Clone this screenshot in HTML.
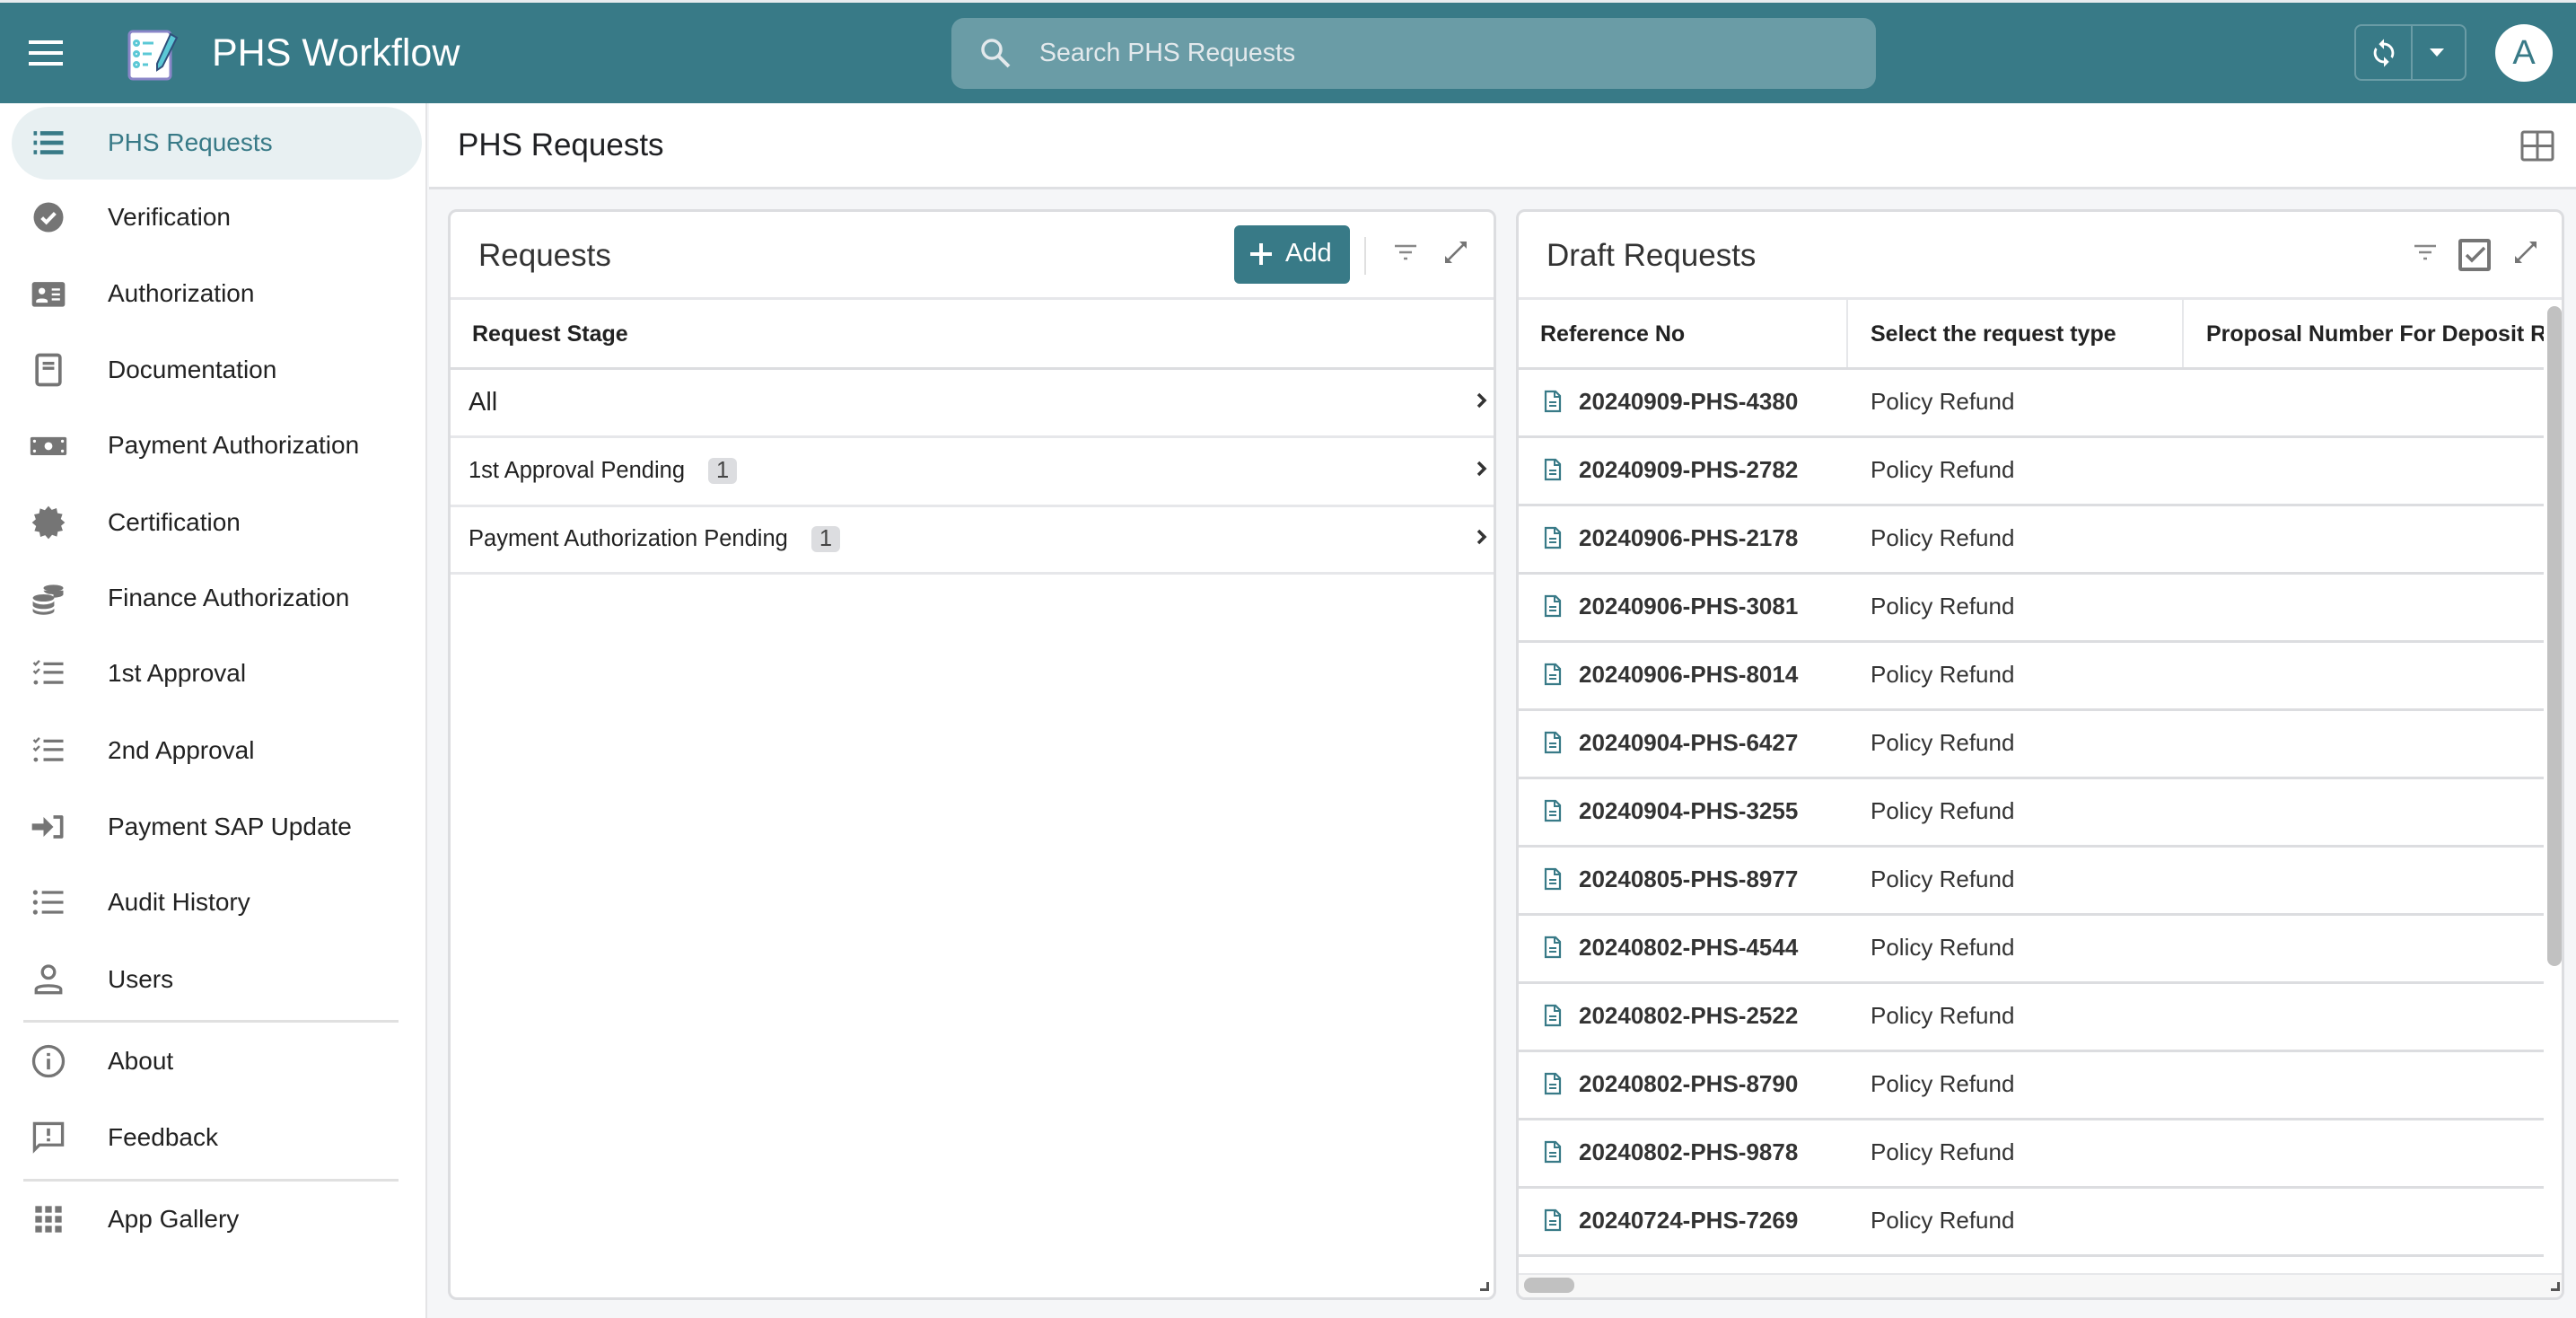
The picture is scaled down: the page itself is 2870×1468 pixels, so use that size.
<!DOCTYPE html>
<html><head><meta charset="utf-8"><style>
*{box-sizing:border-box;margin:0;padding:0}
body{width:2870px;height:1468px;overflow:hidden;background:#f5f6f8;font-family:"Liberation Sans",Arial,sans-serif;color:#202124;position:relative}
.abs{position:absolute}
#hdr{left:0;top:3px;width:2870px;height:112px;background:#387a87}
#top{left:0;top:0;width:2870px;height:3px;background:#e8ecef}
#side{left:0;top:115px;width:476px;height:1353px;background:#fff;border-right:2px solid #e4e4e6}
.ni{position:absolute;left:0;width:476px;height:60px;display:flex;align-items:center}
.ni svg{position:absolute;left:32px;width:44px;height:44px}
.ni span{position:absolute;left:120px;font-size:28px;color:#222}
.div{position:absolute;left:26px;width:418px;height:3px;background:#e0e0e0}
#titlebar{left:478px;top:115px;width:2392px;height:96px;background:#fff;border-bottom:3px solid #dfe0e3}
.card{background:#fff;border:3px solid #dcdde0;border-radius:10px;overflow:hidden}
.line{position:absolute;left:0;right:0;height:3px;background:#e6e7ea}
.ico{fill:#757575}
</style></head><body>
<div id="top" class="abs"></div>
<div id="hdr" class="abs">
 <svg class="abs" style="left:32px;top:42px" width="42" height="30" viewBox="0 0 42 30"><rect y="0" width="38" height="4" fill="#fff"/><rect y="12" width="38" height="4" fill="#fff"/><rect y="24" width="38" height="4" fill="#fff"/></svg>
 <svg class="abs" style="left:140px;top:27px" width="62" height="60" viewBox="0 0 62 60">
  <rect x="4" y="5" width="46" height="53" rx="4" fill="#fff" stroke="#8a86c8" stroke-width="3"/>
  <g stroke="#5bc8d6" stroke-width="3" fill="none"><circle cx="12" cy="18" r="2.5"/><circle cx="12" cy="30" r="2.5"/><circle cx="12" cy="42" r="2.5"/><path d="M19 18h12M19 30h10M19 42h6"/></g>
  <path d="M50 8l7 4-16 32-6 4 0-7z" fill="#5bc8d6" stroke="#2f4f7a" stroke-width="2"/>
 </svg>
 <div class="abs" style="left:236px;top:32px;font-size:43px;color:#fff">PHS Workflow</div>
 <div class="abs" style="left:1060px;top:17px;width:1030px;height:79px;background:#6a9ca6;border-radius:14px">
  <svg class="abs" style="left:30px;top:20px" width="40" height="40" viewBox="0 0 40 40"><circle cx="15" cy="15" r="10" fill="none" stroke="#e3e9ec" stroke-width="3.5"/><path d="M22 22l12 12" stroke="#e3e9ec" stroke-width="4"/></svg>
  <div class="abs" style="left:98px;top:23px;font-size:28.5px;color:#e3e9ec">Search PHS Requests</div>
 </div>
 <div class="abs" style="left:2623px;top:24px;width:125px;height:63px;border:2px solid #6a9ca6;border-radius:8px">
  <div class="abs" style="left:61px;top:0;width:2px;height:59px;background:#6a9ca6"></div>
  <svg class="abs" style="left:14px;top:12px" width="34" height="36" viewBox="0 0 24 24"><path fill="#fff" d="M12 4V1L8 5l4 4V6c3.3 0 6 2.7 6 6 0 1-.25 2-.7 2.8l1.460 1.46C19.54 15.03 20 13.570 20 12c0-4.42-3.58-8-8-8zm0 14c-3.3 0-6-2.7-6-6 0-1 .25-2 .7-2.8L5.24 7.74C4.46 8.97 4 10.43 4 12c0 4.42 3.58 8 8 8v3l4-4-4-4v3z"/></svg>
  <svg class="abs" style="left:80px;top:22px" width="20" height="14" viewBox="0 0 20 14"><path d="M2 3h16l-8 9z" fill="#fff"/></svg>
 </div>
 <div class="abs" style="left:2780px;top:24px;width:64px;height:64px;border-radius:50%;background:#fff;color:#387a87;font-size:38px;text-align:center;line-height:64px">A</div>
</div>

<div id="side" class="abs">
 <div class="abs" style="left:13px;top:4px;width:457px;height:81px;background:#e8f0f2;border-radius:41px"></div>
 <div class="ni" style="top:14px"><svg viewBox="0 0 24 24"><path fill="#387a87" d="M3 5h2v2.5H3zm0 5.7h2v2.6H3zM3 16.5h2V19H3zM7 5h14v2.5H7zm0 5.7h14v2.6H7zm0 5.8h14V19H7z"/></svg><span style="color:#387a87">PHS Requests</span></div>
 <div class="ni" style="top:97px"><svg viewBox="0 0 24 24"><circle cx="12" cy="12" r="9" class="ico"/><path d="M8 12.3l2.7 2.7L16 9.5" stroke="#fff" stroke-width="2.2" fill="none"/></svg><span>Verification</span></div>
 <div class="ni" style="top:182px"><svg viewBox="0 0 24 24"><rect x="2" y="5" width="20" height="15" rx="1.5" class="ico"/><circle cx="8" cy="10.5" r="2" fill="#fff"/><path d="M4.5 16.5c0-2 7-2 7 0v1h-7z" fill="#fff"/><path d="M14 9.5h5M14 12.5h5M14 15.5h5" stroke="#fff" stroke-width="1.3"/></svg><span>Authorization</span></div>
 <div class="ni" style="top:267px"><svg viewBox="0 0 24 24"><rect x="5" y="3" width="14" height="18" rx="1.5" fill="none" stroke="#757575" stroke-width="2"/><path d="M8.5 8h7M8.5 11h7" stroke="#757575" stroke-width="1.8"/></svg><span>Documentation</span></div>
 <div class="ni" style="top:351px"><svg viewBox="0 0 24 24" style="width:48px;left:30px"><rect x="1" y="7" width="22" height="11" rx="1" class="ico"/><circle cx="12" cy="12.5" r="2.4" fill="#fff"/><circle cx="3.5" cy="9.5" r=".9" fill="#fff"/><circle cx="20.5" cy="9.5" r=".9" fill="#fff"/><circle cx="3.5" cy="15.5" r=".9" fill="#fff"/><circle cx="20.5" cy="15.5" r=".9" fill="#fff"/></svg><span>Payment Authorization</span></div>
 <div class="ni" style="top:437px"><svg viewBox="0 0 24 24"><path class="ico" d="M12 2l2 2.3 2.9-1 .6 3 3 .6-1 2.9L22 12l-2.3 2 1 2.9-3 .6-.6 3-2.9-1L12 22l-2-2.3-2.9 1-.6-3-3-.6 1-2.9L2 12l2.3-2-1-2.9 3-.6.6-3 2.9 1z"/></svg><span>Certification</span></div>
 <div class="ni" style="top:521px"><svg viewBox="0 0 24 24"><ellipse cx="15" cy="6" rx="6" ry="2" class="ico"/><path class="ico" d="M9 7.5h12v2.3c0 1.1-2.7 2-6 2v-2c-1 0-5 0-6-2.3z"/><ellipse cx="9" cy="12" rx="6.5" ry="2.2" class="ico"/><path class="ico" d="M2.5 14c1 1.4 4 2 6.5 2s5.5-.6 6.5-2v2.5c0 1.2-3 2.2-6.5 2.2s-6.5-1-6.5-2.2zM2.5 18.5c1 1.4 4 2 6.5 2s5.5-.6 6.5-2V20c0 1.2-3 2.2-6.5 2.2S2.5 21.2 2.5 20z"/></svg><span>Finance Authorization</span></div>
 <div class="ni" style="top:605px"><svg viewBox="0 0 24 24"><path d="M3 5.5l1.2 1.2L6.5 4.3M3 10.5l1.2 1.2 2.3-2.4" stroke="#757575" stroke-width="1.3" fill="none"/><circle cx="4.3" cy="17.5" r="1.3" class="ico"/><path d="M9 5.3h12v1.8H9zm0 5.2h12v1.8H9zm0 6.1h12v1.8H9z" class="ico"/></svg><span>1st Approval</span></div>
 <div class="ni" style="top:691px"><svg viewBox="0 0 24 24"><path d="M3 5.5l1.2 1.2L6.5 4.3M3 10.5l1.2 1.2 2.3-2.4" stroke="#757575" stroke-width="1.3" fill="none"/><circle cx="4.3" cy="17.5" r="1.3" class="ico"/><path d="M9 5.3h12v1.8H9zm0 5.2h12v1.8H9zm0 6.1h12v1.8H9z" class="ico"/></svg><span>2nd Approval</span></div>
 <div class="ni" style="top:776px"><svg viewBox="0 0 24 24"><path class="ico" d="M2 10h7V6l6 6-6 6v-4H2zM15 5h5a1 1 0 011 1v12a1 1 0 01-1 1h-5v-2h4V7h-4z"/></svg><span>Payment SAP Update</span></div>
 <div class="ni" style="top:860px"><svg viewBox="0 0 24 24"><circle cx="4" cy="6" r="1.4" class="ico"/><circle cx="4" cy="12" r="1.4" class="ico"/><circle cx="4" cy="18" r="1.4" class="ico"/><path d="M8 5.1h13v1.8H8zm0 6h13v1.8H8zm0 6h13v1.8H8z" class="ico"/></svg><span>Audit History</span></div>
 <div class="ni" style="top:946px"><svg viewBox="0 0 24 24"><circle cx="12" cy="7.5" r="3.7" fill="none" stroke="#757575" stroke-width="1.8"/><path d="M4.5 20v-2c0-3 15-3 15 0v2z" fill="none" stroke="#757575" stroke-width="1.8"/></svg><span>Users</span></div>
 <div class="div" style="top:1021px"></div>
 <div class="ni" style="top:1037px"><svg viewBox="0 0 24 24"><circle cx="12" cy="12" r="9" fill="none" stroke="#757575" stroke-width="1.8"/><path d="M12 10.5v6.5M12 7v1.8" stroke="#757575" stroke-width="2"/></svg><span>About</span></div>
 <div class="ni" style="top:1122px"><svg viewBox="0 0 24 24"><path d="M3.5 3.5h17v13h-14l-3 3z" fill="none" stroke="#757575" stroke-width="1.8"/><path d="M12 6.5v4.5M12 12.5v1.8" stroke="#757575" stroke-width="2"/></svg><span>Feedback</span></div>
 <div class="div" style="top:1198px"></div>
 <div class="ni" style="top:1213px"><svg viewBox="0 0 24 24"><g class="ico"><rect x="4" y="4" width="4" height="4"/><rect x="10" y="4" width="4" height="4"/><rect x="16" y="4" width="4" height="4"/><rect x="4" y="10" width="4" height="4"/><rect x="10" y="10" width="4" height="4"/><rect x="16" y="10" width="4" height="4"/><rect x="4" y="16" width="4" height="4"/><rect x="10" y="16" width="4" height="4"/><rect x="16" y="16" width="4" height="4"/></g></svg><span>App Gallery</span></div>
</div>

<div id="titlebar" class="abs">
 <div class="abs" style="left:32px;top:27px;font-size:35px;color:#202124">PHS Requests</div>
 <svg class="abs" style="left:2330px;top:30px" width="38" height="36" viewBox="0 0 38 36"><rect x="2" y="2" width="34" height="31" rx="2" fill="none" stroke="#757575" stroke-width="3"/><path d="M19 2v31M2 17.5h34" stroke="#757575" stroke-width="3"/></svg>
</div>

<!-- Requests card -->
<div class="abs card" style="left:499px;top:233px;width:1168px;height:1215px">
 <div class="abs" style="left:31px;top:29px;font-size:35px;color:#333">Requests</div>
 <div class="abs" style="left:873px;top:15px;width:129px;height:65px;background:#387a87;border-radius:6px;color:#fff;font-size:29px">
  <svg class="abs" style="left:16px;top:18px" width="28" height="28" viewBox="0 0 28 28"><path d="M14 2v24M2 14h24" stroke="#fff" stroke-width="4"/></svg>
  <span class="abs" style="left:57px;top:15px">Add</span></div>
 <div class="abs" style="left:1018px;top:28px;width:2px;height:42px;background:#e0e0e0"></div>
 <svg class="abs" style="left:1051px;top:35px" width="26" height="22" viewBox="0 0 26 22"><path d="M1 3h24M6 10h14M11 17h4" stroke="#888" stroke-width="2.6"/></svg>
 <svg class="abs" style="left:1104px;top:29px" width="32" height="32" viewBox="0 0 24 24"><path fill="#757575" d="M21 3h-6l2.3 2.3-12 12L3 15v6h6l-2.3-2.3 12-12L21 9z"/></svg>
 <div class="line" style="top:95px"></div>
 <div class="abs" style="left:24px;top:122px;font-size:25px;font-weight:bold;color:#222">Request Stage</div>
 <div class="line" style="top:173px;background:#dcdde0"></div>
 <div class="abs" style="left:20px;top:196px;font-size:29px;color:#222">All</div>
 <div class="line" style="top:249px"></div>
 <div class="abs" style="left:20px;top:274px;font-size:25.5px;color:#222">1st Approval Pending<span style="display:inline-block;margin-left:26px;background:#dcdde0;border-radius:6px;padding:0 9px;color:#444">1</span></div>
 <div class="line" style="top:326px"></div>
 <div class="abs" style="left:20px;top:350px;font-size:25.5px;color:#222">Payment Authorization Pending<span style="display:inline-block;margin-left:26px;background:#dcdde0;border-radius:6px;padding:0 9px;color:#444">1</span></div>
 <div class="line" style="top:401px"></div>
 <svg class="abs" style="left:1142px;top:200px" width="14" height="20" viewBox="0 0 14 20"><path d="M3 3l7 7-7 7" stroke="#333" stroke-width="3.5" fill="none"/></svg>
 <svg class="abs" style="left:1142px;top:276px" width="14" height="20" viewBox="0 0 14 20"><path d="M3 3l7 7-7 7" stroke="#333" stroke-width="3.5" fill="none"/></svg>
 <svg class="abs" style="left:1142px;top:352px" width="14" height="20" viewBox="0 0 14 20"><path d="M3 3l7 7-7 7" stroke="#333" stroke-width="3.5" fill="none"/></svg>
 <div class="abs" style="left:1147px;top:1192px;width:10px;height:10px;border-right:3px solid #555;border-bottom:3px solid #555"></div>
</div>

<!-- Draft card -->
<div class="abs card" style="left:1689px;top:233px;width:1168px;height:1215px">
 <div class="abs" style="left:31px;top:29px;font-size:35px;color:#333">Draft Requests</div>
 <svg class="abs" style="left:997px;top:35px" width="26" height="22" viewBox="0 0 26 22"><path d="M1 3h24M6 10h14M11 17h4" stroke="#888" stroke-width="2.6"/></svg>
 <div class="abs" style="left:1047px;top:30px;width:36px;height:36px;border:4px solid #757575;border-radius:3px"><svg class="abs" style="left:3px;top:4px" width="24" height="20" viewBox="0 0 24 20"><path d="M2 10l6 6L22 2" stroke="#757575" stroke-width="3.5" fill="none"/></svg></div>
 <svg class="abs" style="left:1106px;top:29px" width="32" height="32" viewBox="0 0 24 24"><path fill="#757575" d="M21 3h-6l2.3 2.3-12 12L3 15v6h6l-2.3-2.3 12-12L21 9z"/></svg>
 <div class="line" style="top:95px"></div>
 <div class="abs" style="left:0;top:98px;width:1142px;height:1090px;overflow:hidden" id="tbl">
  <div class="abs" style="left:365px;top:0;width:2px;height:76px;background:#e6e7ea"></div>
  <div class="abs" style="left:739px;top:0;width:2px;height:76px;background:#e6e7ea"></div>
  <div class="abs" style="left:24px;top:24px;font-size:25px;font-weight:bold;color:#222;white-space:nowrap">Reference No</div>
  <div class="abs" style="left:392px;top:24px;font-size:25px;font-weight:bold;color:#222;white-space:nowrap">Select the request type</div>
  <div class="abs" style="left:766px;top:24px;font-size:25px;font-weight:bold;color:#222;white-space:nowrap">Proposal Number For Deposit Refund</div>
  <div class="abs" style="left:0;top:75px;width:1142px;height:3px;background:#dcdde0"></div>
  <div id="rows"></div>
 </div>
 <div class="abs" style="left:1146px;top:105px;width:16px;height:735px;background:#c1c1c1;border-radius:8px"></div>
 <div class="abs" style="left:0;top:1182px;width:1162px;height:28px;background:#f7f7f7;border-top:2px solid #e6e7ea"></div>
 <div class="abs" style="left:6px;top:1187px;width:56px;height:17px;background:#c1c1c1;border-radius:8px"></div>
 <div class="abs" style="left:1150px;top:1192px;width:10px;height:10px;border-right:3px solid #555;border-bottom:3px solid #555"></div>
</div>
<script>
var ids=["20240909-PHS-4380","20240909-PHS-2782","20240906-PHS-2178","20240906-PHS-3081","20240906-PHS-8014","20240904-PHS-6427","20240904-PHS-3255","20240805-PHS-8977","20240802-PHS-4544","20240802-PHS-2522","20240802-PHS-8790","20240802-PHS-9878","20240724-PHS-7269"];
var h="";
ids.forEach(function(id,i){var t=78+i*76;
h+='<svg class="abs" style="left:28px;top:'+(t+22)+'px" width="20" height="26" viewBox="0 0 20 26"><path d="M2 2h11l5 5v17H2z" fill="none" stroke="#387a87" stroke-width="2.2"/><path d="M12 2v6h6M6 14h8M6 18h8" stroke="#387a87" stroke-width="2" fill="none"/></svg>';
h+='<div class="abs" style="left:67px;top:'+(t+20)+'px;font-size:26px;font-weight:bold;color:#333">'+id+'</div>';
h+='<div class="abs" style="left:392px;top:'+(t+20)+'px;font-size:26px;color:#333">Policy Refund</div>';
h+='<div class="abs" style="left:0;top:'+(t+73)+'px;width:1142px;height:3px;background:#dcdde0"></div>';});
document.getElementById("rows").innerHTML=h;
</script>
</body></html>
